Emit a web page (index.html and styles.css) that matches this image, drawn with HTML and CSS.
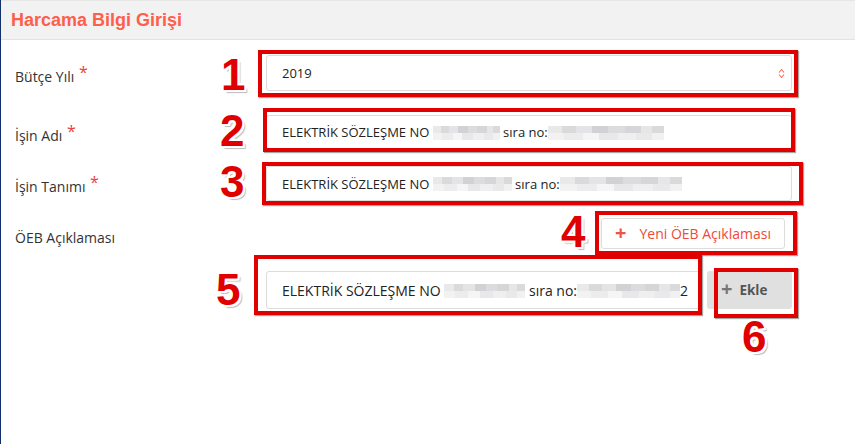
FILE: index.html
```html
<!DOCTYPE html>
<html lang="tr">

<head>
  <meta charset="UTF-8">
  <meta name="viewport" content="width=device-width, initial-scale=1.0">
  <title>Harcama Bilgi Girişi</title>
  <link rel="stylesheet" href="styles.css">
</head>

<body>
  <div class="page">
    <header class="page-head">
      <h3>Harcama Bilgi Girişi</h3>
    </header>

    <form class="form">
      <div class="row r1">
        <label class="lbl">Bütçe Yılı <span class="req">*</span></label>
        <div class="field">
          <div class="control select">
            <span>2019</span>
            <svg class="arrows" width="7" height="11" viewBox="0 0 7 11">
              <path d="M1 4.5 L3.5 1.5 L6 4.5 M1 6.5 L3.5 9.5 L6 6.5" fill="none" stroke="#ff6b5c" stroke-width="1.1"/>
            </svg>
          </div>
          <span class="mark m1"></span>
          <span class="num n1">1</span>
        </div>
      </div>

      <div class="row r2">
        <label class="lbl">İşin Adı <span class="req">*</span></label>
        <div class="field">
          <div class="control">ELEKTRİK SÖZLEŞME NO <span class="blur" style="width:67px"></span> sıra no:<span class="blur" style="width:116px"></span></div>
          <span class="mark m2"></span>
          <span class="num n2">2</span>
        </div>
      </div>

      <div class="row r3">
        <label class="lbl">İşin Tanımı <span class="req">*</span></label>
        <div class="field">
          <div class="control">ELEKTRİK SÖZLEŞME NO <span class="blur" style="width:79px"></span> sıra no:<span class="blur" style="width:122px"></span></div>
          <span class="mark m3"></span>
          <span class="num n3">3</span>
        </div>
      </div>

      <div class="row r4">
        <label class="lbl">ÖEB Açıklaması</label>
        <div class="field field-end">
          <div class="btn-wrap">
            <button type="button" class="btn btn-new"><span class="plus">+</span>Yeni ÖEB Açıklaması</button>
            <span class="mark m4"></span>
            <span class="num n4">4</span>
          </div>
        </div>
      </div>

      <div class="row r5">
        <span class="lbl"></span>
        <div class="field field-split">
          <div class="input-wrap">
            <div class="control big">ELEKTRİK SÖZLEŞME NO <span class="blur" style="width:81px"></span> sıra no:<span class="blur" style="width:103px"></span>2</div>
            <span class="mark m5"></span>
            <span class="num n5">5</span>
          </div>
          <div class="btn-wrap">
            <button type="button" class="btn btn-add"><span class="plus">+</span>Ekle</button>
            <span class="mark m6"></span>
            <span class="num n6">6</span>
          </div>
        </div>
      </div>
    </form>
  </div>
</body>

</html>
```

FILE: styles.css
```css
* {
  margin: 0;
  padding: 0;
  box-sizing: border-box;
}

body {
  font-family: 'Open Sans', 'Noto Sans', sans-serif;
  color: #333;
  background: #fff;
}

.page {
  height: 444px;
  border-left: 1px solid #12306a;
}

.page-head {
  height: 40px;
  background: #f2f2f2;
  border-top: 1px solid #e6e6e6;
  border-bottom: 1px solid #e3e3e3;
  padding-left: 10px;
  display: flex;
  align-items: center;
}

.page-head h3 {
  font-family: 'Liberation Sans', Arial, sans-serif;
  font-size: 18px;
  font-weight: 700;
  color: #ff5e4b;
}

.row {
  display: flex;
  align-items: center;
  padding-left: 14px;
}

.r1 { margin-top: 15px; height: 36px; }
.r2 { margin-top: 24px; height: 34px; }
.r3 { margin-top: 17px; height: 35px; }
.r4 { margin-top: 17px; height: 31px; }
.r5 { margin-top: 22px; height: 38px; }

.lbl {
  width: 251px;
  font-size: 14px;
  color: #333;
}

.r4 .lbl {
  margin-top: 8px;
}

.req {
  color: #e8433a;
  font-size: 16px;
  vertical-align: 4px;
  margin-left: 1px;
}

.field {
  position: relative;
  width: 526px;
  height: 100%;
}

.control {
  height: 100%;
  border: 1px solid #dcdcdc;
  border-radius: 3px;
  background: #fff;
  padding-left: 15px;
  font-size: 13px;
  color: #222;
  display: flex;
  align-items: center;
  white-space: pre;
}

.control.big {
  font-size: 14px;
  padding-left: 15px;
}

.select {
  justify-content: space-between;
  padding-right: 6px;
}

.blur {
  display: inline-block;
  height: 14px;
  margin-top: 1px;
  background:
    linear-gradient(90deg, #e9e9ea 0 12%, #dadadc 12% 24%, #e4e4e6 24% 38%, #d2d2d5 38% 52%, #dcdcde 52% 66%, #d6d6d9 66% 80%, #e6e6e7 80% 90%, #dadadb 90%) top / 100% 50% no-repeat,
    linear-gradient(90deg, #f2f2f3 0 14%, #ececed 14% 30%, #f5f5f5 30% 44%, #e8e8ea 44% 60%, #efeff0 60% 76%, #e9e9eb 76% 90%, #f1f1f2 90%) bottom / 100% 50% no-repeat;
}

.field-end {
  display: flex;
  justify-content: flex-end;
  padding-right: 7px;
}

.field-split {
  display: flex;
  gap: 7px;
}

.input-wrap {
  position: relative;
  width: 434px;
  height: 100%;
}

.btn-wrap {
  position: relative;
  height: 100%;
}

.btn {
  height: 100%;
  font-family: 'Open Sans', sans-serif;
  border-radius: 3px;
  cursor: pointer;
  display: flex;
  align-items: center;
}

.btn-new {
  width: 184px;
  background: #fff;
  border: 1px solid #ddd;
  color: #ef4a3a;
  font-size: 14px;
  padding-left: 13px;
  gap: 13px;
}

.btn-new .plus {
  font-size: 20px;
  font-weight: 700;
  color: #f0553f;
  line-height: 1;
  margin-top: -2px;
}

.btn-add {
  width: 85px;
  background: #e0e0e0;
  border: none;
  color: #555;
  font-size: 13.5px;
  font-weight: 700;
  padding-left: 14px;
  gap: 7px;
}

.btn-add .plus {
  font-size: 20px;
  color: #777;
  line-height: 1;
  margin-top: -2px;
}

/* annotation overlays */
.mark {
  position: absolute;
  border: 4px solid #e10000;
  box-shadow: 1px 1px 1px rgba(0, 0, 0, 0.35);
  pointer-events: none;
}

.m1 { left: -8px; top: -5px; right: -6px; bottom: -6px; }
.m2 { left: -3px; top: -7px; right: -3px; bottom: -3px; }
.m3 { left: -4px; top: -4px; right: -11px; bottom: -4px; }
.m4 { left: -6px; top: -7px; right: -12px; bottom: -6px; }
.m5 { left: -12px; top: -16px; right: -2px; bottom: -6px; }
.m6 { left: 7px; top: -3px; right: -6px; bottom: -9px; }

.num {
  position: absolute;
  font-family: 'Liberation Sans', Arial, sans-serif;
  font-size: 44px;
  font-weight: 700;
  line-height: 1;
  color: #e10000;
  text-shadow:
    2px 0 0 #fff, -2px 0 0 #fff, 0 2px 0 #fff, 0 -2px 0 #fff,
    2px 2px 0 #fff, -2px -2px 0 #fff, 2px -2px 0 #fff, -2px 2px 0 #fff,
    3px 3px 1px #bbb;
}

.n1 { left: -45px; top: -2px; }
.n2 { left: -46px; top: -6px; }
.n3 { left: -46px; top: -6px; }
.n4 { left: -40px; top: -8px; }
.n5 { left: -50px; top: -3px; }
.n6 { left: 35px; top: 44px; }
```
